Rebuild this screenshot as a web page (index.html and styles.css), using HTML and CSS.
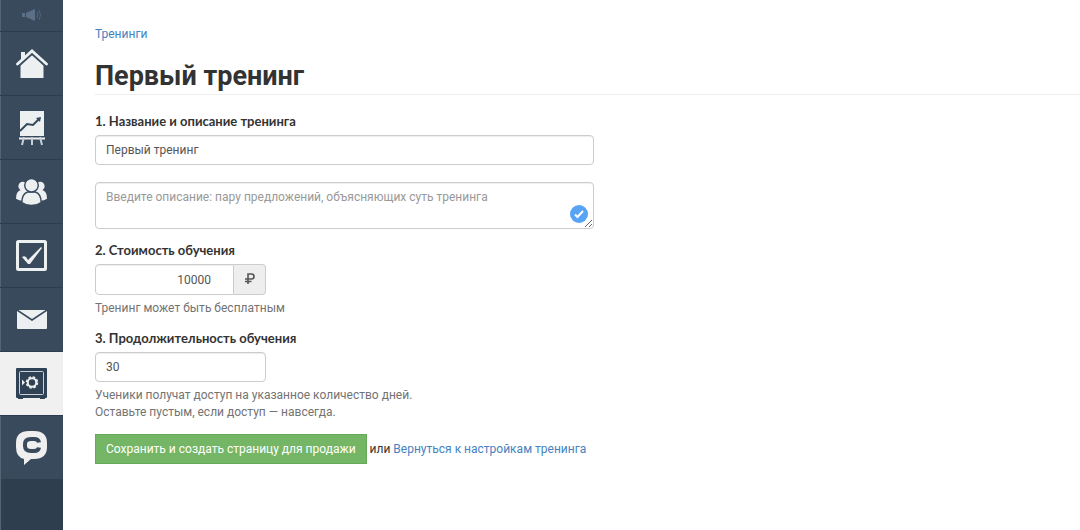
FILE: index.html
```html
<!DOCTYPE html>
<html lang="ru">
<head>
<meta charset="utf-8">
<title>Первый тренинг</title>
<link rel="stylesheet" href="styles.css">
</head>
<body>
<div class="app">
  <nav class="sidebar" aria-label="Главное меню">
    <a class="nav-item nav-item-short" href="#" aria-label="Объявления">
      <svg width="20" height="14" viewBox="0 0 20 14"><path d="M0 5h3v4H0zM4 5l9-4v12L4 9z" fill="#5b6f86"/><path d="M15 4q2 3 0 6M17 2q3 5 0 10" fill="none" stroke="#50647a"/></svg>
    </a>
    <a class="nav-item" href="#" aria-label="Главная">
      <svg width="32" height="32" viewBox="0 0 32 32" fill="#ecf0f1"><path d="M5 4h4v5L5 12zM16 6L27.500 17v13h-23V17z"/><path d="M1.500 18L16 5 30.500 18" fill="none" stroke="#394a5d" stroke-width="3.500"/><path d="M1.500 16L16 3 30.500 16" fill="none" stroke="#ecf0f1" stroke-width="2.800" stroke-linecap="round"/></svg>
    </a>
    <a class="nav-item" href="#" aria-label="Статистика">
      <svg width="26" height="36" viewBox="0 0 26 36"><path d="M1 1h24v25H1z" fill="#ecf0f1"/><path d="M1 21l7-7 6 1 6-6" fill="none" stroke="#34495e" stroke-width="2"/><path d="M17 8l5-1-1 5z" fill="#34495e"/><path d="M0 28.500h26" stroke="#ecf0f1" stroke-width="2"/><path d="M5 27l-2 8M13 27v8M21 27l2 8" stroke="#c6cfda" stroke-width="2"/></svg>
    </a>
    <a class="nav-item" href="#" aria-label="Пользователи">
      <svg width="31" height="28" viewBox="0 0 32 28" fill="#ecf0f1"><circle cx="7" cy="8" r="4.500"/><circle cx="25" cy="8" r="4.500"/><path d="M0 21q0-8 5-9h22q5 1 5 9-3 2-7 2H7q-4 0-7-2z"/><path d="M6 25q0-9 6-11h8q6 2 6 11-4 3-10 3T6 25z" stroke="#394a5d" stroke-width="1.500"/><circle cx="16" cy="7" r="7" stroke="#394a5d" stroke-width="1.500"/></svg>
    </a>
    <a class="nav-item" href="#" aria-label="Задания">
      <svg width="31" height="31" viewBox="0 0 31 31"><rect x="1.500" y="1.500" width="28" height="28" rx="1" fill="none" stroke="#ecf0f1" stroke-width="3"/><path d="M6 17q2-1.500 4 0l2 3L25 7l1 1-12 16h-2z" fill="#ecf0f1"/></svg>
    </a>
    <a class="nav-item" href="#" aria-label="Сообщения">
      <svg width="30" height="20" viewBox="0 0 30 20"><rect width="30" height="19" rx="1" fill="#ecf0f1"/><path d="M0 0l15 10L30 0" fill="none" stroke="#394a5d" stroke-width="1.600"/></svg>
    </a>
    <a class="nav-item nav-item-active" href="#" aria-label="Продажи" aria-current="page">
      <svg width="31" height="31" viewBox="0 0 31 31"><path d="M1 0h29q1 0 1 1v28q0 1-1 1h-1v1h-5v-1H7v1H2v-1H1q-1 0-1-1V1q0-1 1-1z" fill="#2f4255"/><rect x="3.500" y="3.500" width="24" height="23" rx="1" fill="none" stroke="#c9d0d7"/><path d="M6 11.500l3 3-3 3z" fill="#eee"/><circle cx="16" cy="14.500" r="4.200" fill="none" stroke="#eee" stroke-width="2"/><circle cx="16" cy="14.500" r="5.500" fill="none" stroke="#eee" stroke-width="1.500" stroke-dasharray="2.600 1.720"/></svg>
    </a>
    <a class="nav-item nav-item-last" href="#" aria-label="Чат">
      <svg width="31" height="36" viewBox="0 0 31 36"><path d="M13 1h5q13 0 13 12v4q0 12-13 12h-3l-7 6v-6Q0 27 0 17v-4Q0 1 13 1z" fill="#efefef"/><path d="M23 12.500Q22.500 9 18 9h-3q-6 0-6 5v2q0 5 6 5h3q4.500 0 5-3.500" fill="none" stroke="#394a5d" stroke-width="4"/></svg>
    </a>
  </nav>
  <main class="content">
    <a class="link" href="#">Тренинги</a>
    <h1 class="title">Первый тренинг</h1>
    <form class="form">
      <label class="label" for="name">1. Название и описание тренинга</label>
      <input class="control" id="name" type="text" value="Первый тренинг">
      <div class="description">
        <textarea class="control area" aria-label="Описание тренинга" placeholder="Введите описание: пару предложений, объясняющих суть тренинга"></textarea>
        <svg class="badge" width="18" height="18" viewBox="0 0 18 18"><circle cx="9" cy="9" r="9" fill="#57a3f5"/><path d="M5 9.500l2.500 2.500 5.500-6" fill="none" stroke="#fff" stroke-width="2"/></svg>
      </div>
      <label class="label" for="price">2. Стоимость обучения</label>
      <div class="price">
        <input class="control price-input" id="price" type="text" value="10000">
        <span class="addon"><svg width="10" height="11" viewBox="0 0 10 11" role="img" aria-label="Рубль"><path d="M3 11V1h3.500q2.500 0 2.500 2.500T6.500 6H0M0 8.500h6.500" fill="none" stroke="#555" stroke-width="1.600"/></svg></span>
      </div>
      <p class="hint">Тренинг может быть бесплатным</p>
      <label class="label" for="days">3. Продолжительность обучения</label>
      <input class="control days" id="days" type="text" value="30">
      <p class="hint">Ученики получат доступ на указанное количество дней.<br>Оставьте пустым, если доступ — навсегда.</p>
      <div class="actions">
        <button class="button" type="submit">Сохранить и создать страницу для продажи</button>
        <span>или <a class="link" href="#">Вернуться к настройкам тренинга</a></span>
      </div>
    </form>
  </main>
</div>
</body>
</html>
```
FILE: styles.css
```css
* { box-sizing: border-box; }
body {
  margin: 0;
  background: #fff;
  color: #333;
  font: 12px/17px Roboto, "Liberation Sans", sans-serif;
}
.app { display: flex; min-height: 100vh; }
.sidebar {
  width: 63px;
  flex: none;
  background: #2f3e4e;
  box-shadow: inset 1px 0 #536475;
}
.nav-item {
  display: flex;
  align-items: center;
  justify-content: center;
  height: 64px;
  background: #394a5d;
  border-bottom: 1px solid #2d3d4f;
  box-shadow: inset 1px 0 #536475;
}
.nav-item-short { height: 32px; padding-bottom: 2px; }
.nav-item-active { background: #f0f0f0; box-shadow: none; }
.nav-item-last { height: 63px; border-bottom: 0; }
.content { flex: 1; min-width: 0; padding: 26px 0 24px 32px; }
.link { color: #4682bf; text-decoration: none; }
.title {
  margin: 16px 0 18px;
  padding-bottom: 1px;
  border-bottom: 1px solid #eee;
  font-size: 27px;
  line-height: 34px;
  font-weight: 700;
}
.form { max-width: 499px; }
.label {
  display: block;
  margin-bottom: 5px;
  font-family: Lato, Roboto, sans-serif;
  font-size: 13px;
  font-weight: 700;
}
.control {
  display: block;
  width: 100%;
  height: 30px;
  padding: 6px 10px;
  border: 1px solid #ccc;
  border-radius: 4px;
  background: #fff;
  color: #555;
  font: inherit;
  box-shadow: inset 0 1px 1px #eee;
}
.control::placeholder { color: #999; }
.description { position: relative; margin: 17px 0 13px; }
.area { height: 47px; resize: vertical; overflow: hidden; }
.badge { position: absolute; right: 6px; bottom: 6px; }
.price { display: flex; width: 171px; height: 31px; }
.price-input {
  flex: 1;
  min-width: 0;
  height: 100%;
  padding-right: 22px;
  text-align: right;
  border-radius: 4px 0 0 4px;
}
.addon {
  display: flex;
  align-items: center;
  justify-content: center;
  width: 32px;
  padding-bottom: 2px;
  border: 1px solid #ccc;
  border-left: 0;
  border-radius: 0 4px 4px 0;
  background: #eee;
}
.days { width: 171px; }
.hint { margin: 5px 0 13px; color: #737373; }
.actions { display: flex; align-items: center; gap: 3px; white-space: nowrap; }
.button {
  height: 30px;
  padding: 0 10px;
  border: 1px solid #64ab57;
  background: #74b566;
  color: #fff;
  font: inherit;
}
```
